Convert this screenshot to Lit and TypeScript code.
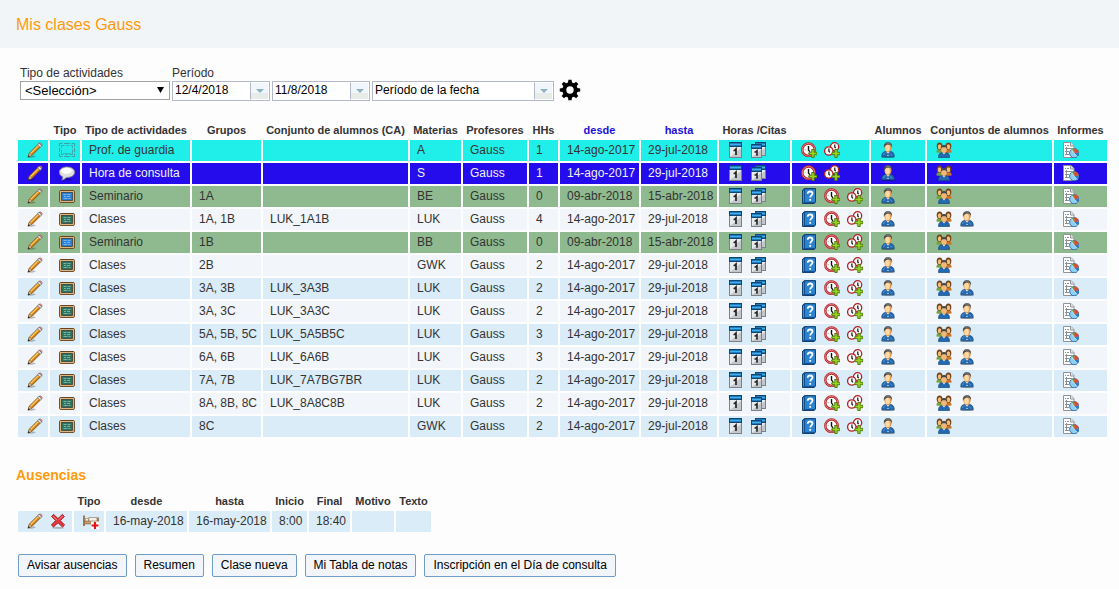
import { LitElement, html, css, svg, nothing } from "lit";
import type { TemplateResult } from "lit";
import { customElement, property } from "lit/decorators.js";

/* 16 x 16 drawings, keyed by icon name */
const person = svg`
  <ellipse cx="8" cy="15.200" rx="6.800" ry=".8" fill="#000" opacity=".35"/>
  <path d="M1.800 14.800c0-3 .8-4.800 3.400-5.200h5.600c2.600.4 3.400 2.200 3.400 5.200z" fill="#2369b0" stroke="#164a80" stroke-width=".8"/>
  <path d="M3.600 13c.2-1.600 1-2.400 2-2.600M10.500 11.500l1.500 2" stroke="#5b9bd8" stroke-width=".9" fill="none"/>
  <path d="M6 9.500l2 2.300 2-2.300z" fill="#e8d7c2"/>
  <ellipse cx="8" cy="5.400" rx="3.500" ry="4.700" fill="#dd9a58"/>
  <ellipse cx="7.600" cy="6" rx="2.300" ry="3.200" fill="#ffd9a0"/>
  <path d="M4 6C3.400 2 5 .2 8 .2S12.600 2 12 6c-.5-2.200-1-3-1.700-3.200-1.600-.3-2.800-.4-4 .1C5.500 3.300 4.400 4.200 4 6z" fill="#45484c"/>
  <path d="M5.500 1.800C7 .9 8.800.9 10.300 1.700" stroke="#858a90" stroke-width=".8" fill="none"/>
  <circle cx="8" cy="13.400" r=".6" fill="#fff"/>`;

const board = (face: string, light: string) => svg`
  <rect x=".6" y="2.500" width="14.800" height="11.900" rx="1.200" fill="#b98044" stroke="#69431f" stroke-width="1"/>
  <rect x="1.600" y="3.500" width="12.800" height="9.900" fill="none" stroke="#e9c48c" stroke-width=".8"/>
  <rect x="2.700" y="4.600" width="10.600" height="7.700" fill="${face}" stroke="#243e43" stroke-width=".7"/>
  <path d="M4.500 6.500h3m1 0h3M5 8.500h2m1 0h3M4.500 10.500h4m1 0h2" stroke="${light}" stroke-width=".8" opacity=".75"/>`;

const plus = svg`
  <path d="M10.800 7.500h2.400v2.800H16v2.400h-2.800v2.800h-2.400v-2.800H8v-2.400h2.800z" fill="#9bd41d" stroke="#48780d" stroke-width=".9"/>`;

const head = (x: number, y: number, r: number) => svg`
  <circle cx="${x}" cy="${y}" r="${r}" fill="#fff" stroke="#b21f24" stroke-width="1.300"/>`;

const page = (x: number, y: number, w: number, h: number) => svg`
  <rect x="${x + 0.5}" y="${y + 0.5}" width="${w - 1}" height="${h - 1}" fill="#e9eaec" stroke="#7c8188" stroke-width="1"/>
  <path d="M${x + 1} ${y + h - 1}L${x + w - 1} ${y + 6}V${y + h - 1}z" fill="#c3c6ca"/>
  <rect x="${x}" y="${y}" width="${w}" height="5" fill="#0c4678"/>
  <rect x="${x + 1}" y="${y + 1.5}" width="${w - 2}" height="2" fill="#3fb0f2"/>`;

const icons: Record<string, TemplateResult> = {
  pencil: svg`
    <path d="M1 15.600l6-2 2 .8-4 1.300z" fill="#000" opacity=".25"/>
    <path d="M1.200 14.900l1.200-3.900L11.800 1.700l2.500 2.400-9.400 9.300z" fill="#efa02a" stroke="#6f430f" stroke-width=".8"/>
    <path d="M3.500 11.300l8.700-8.700" stroke="#ffd877" stroke-width="1"/>
    <path d="M4.800 12.600l8.700-8.700" stroke="#a9610f" stroke-width=".8"/>
    <path d="M10.700 2.800l1.500-1.500 2.500 2.400-1.500 1.500z" fill="#dfe4ea" stroke="#68707a" stroke-width=".6"/>
    <path d="M12.200 1.300c1.200-1.200 3.800.8 2.500 2.400z" fill="#e9a19b" stroke="#944641" stroke-width=".6"/>
    <path d="M1.200 14.900l1.200-3.900 2.500 2.400z" fill="#f3d7a6" stroke="#6e5230" stroke-width=".6"/>
    <path d="M.7 15.400l1-2.300 1.300 1.300z" fill="#252525"/>`,
  guard: svg`
    <g fill="none" stroke="#4a7f88" stroke-width="1">
      <path d="M.5 4.500v-3h3M5 1.500h6M12.500 1.500h3v3M15.500 6v4M15.500 11.500v3h-3M11 14.500H5M3.500 14.500h-3v-3M.5 10V6" opacity=".7"/>
      <path d="M2.500 6V3.500h3M7 3.500h3M11.500 3.500h2V6M13.500 7.500v5h-3M9 12.500H6M4.500 12.500h-2v-5" opacity=".55"/>
      <path d="M4 11.500h8" opacity=".45"/>
    </g>`,
  talk: svg`
    <ellipse cx="8" cy="14.400" rx="5" ry=".9" fill="#000" opacity=".3"/>
    <path d="M8 2c4.500 0 7.600 2.200 7.600 5.200S12.500 12.400 8 12.400h-.8C6 14 4.400 14.800 2.800 14.800c.8-.8 1.100-2 .9-3C1.600 10.800.4 9.200.4 7.200.4 4.200 3.500 2 8 2z" fill="#dedede" stroke="#8f8f92" stroke-width=".8"/>
    <ellipse cx="7.400" cy="5.800" rx="5.400" ry="3" fill="#fff"/>`,
  boardBlue: board("#2b80d6", "#b4dcff"),
  boardGreen: board("#2d7462", "#b0dcc8"),
  calendar: svg`${page(1, 0, 13, 16)}
    <path d="M5.500 8.500h1l1.500-1.500v6" fill="none" stroke="#222" stroke-width="1.700"/>`,
  calendars: svg`${page(4, 0, 11, 14)}${page(0, 2, 11, 14)}
    <path d="M3.500 10h1L6 8.700v5" fill="none" stroke="#222" stroke-width="1.600"/>`,
  book: svg`
    <path d="M1.500 2.200L3.500.6h11v13.600l-1.500 1.300H1.500z" fill="#0f4f90" stroke="#0a3768" stroke-width=".9"/>
    <rect x="4" y="1.300" width="10" height="12.800" fill="#2c83cf"/>
    <path d="M2.500 2.500v12" stroke="#7f97ac" stroke-width=".8"/>
    <path d="M6.700 5.700c0-3 4.800-2.800 4.800-.1 0 1.700-2.300 1.900-2.300 3.900M9.200 11v1.700" fill="none" stroke="#fff" stroke-width="1.800"/>`,
  clock: svg`
    <circle cx="7.500" cy="7.700" r="6.200" fill="#fff" stroke="#b31d23" stroke-width="2.400"/>
    <circle cx="7.500" cy="7.700" r="6.300" fill="none" stroke="#ee9392" stroke-width=".8"/>
    <path d="M7.500 3.900v4.200l1.500 1.700" fill="none" stroke="#111" stroke-width="1.400"/>
    <path d="M3.700 7.700h.8M7.500 11.200v.8M10.500 7.700h.8" stroke="#777"/>${plus}`,
  clocks: svg`${head(10.600, 4.800, 4.100)}${head(4.800, 9, 4.200)}
    <path d="M10.800 2.400v2.800l.9 1M4.900 6.500v2.700l1 1.200" fill="none" stroke="#111" stroke-width="1.200"/>${plus}`,
  person,
  people: svg`
    <path d="M.4 10.500c0-2 .8-3.200 2.400-3.400H6v3.800z" fill="#76a03b"/>
    <path d="M15.600 10.500c0-2-.8-3.200-2.400-3.400H10v3.800z" fill="#c9732b"/>
    <ellipse cx="3.600" cy="4.200" rx="2.900" ry="3.600" fill="#70431d"/>
    <ellipse cx="12.400" cy="4.200" rx="2.900" ry="3.600" fill="#70431d"/>
    <ellipse cx="3.600" cy="4.800" rx="1.800" ry="2.500" fill="#f6bd73"/>
    <ellipse cx="12.400" cy="4.800" rx="1.800" ry="2.500" fill="#f6bd73"/>
    <path d="M2.500 15.500c0-2.900.7-4.400 2.800-4.700h5.400c2.100.3 2.800 1.800 2.800 4.700z" fill="#2369b0" stroke="#164a80" stroke-width=".7"/>
    <path d="M6.600 10.800L8 12.400l1.400-1.600z" fill="#f1e2d0"/>
    <ellipse cx="8" cy="7.200" rx="2.800" ry="3.800" fill="#f2b777"/>
    <path d="M4.900 7.500C4.400 4.500 5.700 2.900 8 2.900s3.600 1.600 3.100 4.600c-.5-1.900-1-2.200-3.100-2.200s-2.600.3-3.100 2.200z" fill="#43464a"/>`,
  report: svg`
    <path d="M.5.500h7.500l3 3v12H.5z" fill="#fff" stroke="#8f9499" stroke-width="1"/>
    <path d="M7.500.5v3.500H11" fill="#e3e5e8" stroke="#8f9499" stroke-width="1"/>
    <path d="M2 3.500h1m1 0h2M2 6.500h1m1 0h5M2 9.500h1m1 0h2M3.500 5v8M2 12.500h4" stroke="#8a8f94"/>
    <circle cx="11.200" cy="11.200" r="4.600" fill="#8bd0f5" stroke="#2a619b" stroke-width=".9"/>
    <path d="M11.200 11.200V6.400a4.800 4.800 0 0 1 4.600 4z" fill="#e4472f"/>
    <path d="M11.200 11.200V6.400a4.800 4.800 0 0 0-2.700.9z" fill="#58a43b"/>
    <path d="M11.200 11.200l4.600-.8a4.800 4.800 0 0 1-1.400 4.200z" fill="#2b7fc8"/>
    <path d="M8.500 7.300l2.700 3.900 3.200 3.400" fill="none" stroke="#fff" stroke-width=".6"/>`,
  remove: svg`
    <ellipse cx="8" cy="14.900" rx="6" ry=".8" fill="#000" opacity=".25"/>
    <path d="M1.600 3.400l2-2L8 5.600l4.400-4.200 2 2L10.300 7.600l4.300 4.400-2.100 2L8 9.800 3.500 14l-2.100-2 4.300-4.400z" fill="#e3383b" stroke="#9d171b" stroke-width=".9"/>
    <path d="M3 3.300l3.800 3.600M12.700 2.800L9 6.500" stroke="#f79a96" stroke-width=".9"/>`,
  bed: svg`
    <path d="M1 2.500v10.500M15 4.500v6" stroke="#8a5f35" stroke-width="1.600" fill="none"/>
    <path d="M1 8h14v2.800H1z" fill="#cf9d6d" stroke="#8a5f35" stroke-width=".8"/>
    <path d="M2.300 5.500h3.200V8H2.300zM5.800 4.500H14V8H5.800z" fill="#f4efe6" stroke="#988366" stroke-width=".7"/>
    <rect x="8" y="8.500" width="8" height="7.500" fill="#fff"/>
    <path d="M12 9v7M8.500 12.500h7" stroke="#e01515" stroke-width="2.200"/>`,
};

@customElement("gauss-icon")
class GaussIcon extends LitElement {
  @property() name = "";
  static styles = css`
    :host { display: block; width: 16px; height: 16px; }
    .art { display: block; width: 16px; height: 16px; }
  `;
  render() {
    return html`<svg class="art" viewBox="0 0 16 16" aria-hidden="true">${icons[this.name]}</svg>`;
  }
}

interface Column { label: string; width: number; sort?: boolean }
interface Lesson {
  tone: string; type: string; kind: string; groups: string; set: string;
  subject: string; hours: number; from: string; to: string;
}

const columns: Column[] = [
  { label: "", width: 30 },
  { label: "Tipo", width: 30 },
  { label: "Tipo de actividades", width: 108 },
  { label: "Grupos", width: 69 },
  { label: "Conjunto de alumnos (CA)", width: 145 },
  { label: "Materias", width: 51 },
  { label: "Profesores", width: 64 },
  { label: "HHs", width: 29 },
  { label: "desde", width: 79, sort: true },
  { label: "hasta", width: 76, sort: true },
  { label: "Horas /Citas", width: 71 },
  { label: "", width: 77 },
  { label: "Alumnos", width: 54 },
  { label: "Conjuntos de alumnos", width: 125 },
  { label: "Informes", width: 53 },
];

const absenceColumns: Column[] = [
  { label: "", width: 54 },
  { label: "Tipo", width: 30 },
  { label: "desde", width: 81 },
  { label: "hasta", width: 81 },
  { label: "Inicio", width: 35 },
  { label: "Final", width: 41 },
  { label: "Motivo", width: 42 },
  { label: "Texto", width: 35 },
];

const lesson = (
  tone: string, type: string, kind: string, groups: string, set: string,
  subject: string, hours: number, from = "14-ago-2017", to = "29-jul-2018",
): Lesson => ({ tone, type, kind, groups, set, subject, hours, from, to });

const lessons: Lesson[] = [
  lesson("cyan", "guard", "Prof. de guardia", "", "", "A", 1),
  lesson("blue", "talk", "Hora de consulta", "", "", "S", 1),
  lesson("green", "boardBlue", "Seminario", "1A", "", "BE", 0, "09-abr-2018", "15-abr-2018"),
  lesson("pale", "boardGreen", "Clases", "1A, 1B", "LUK_1A1B", "LUK", 4),
  lesson("green", "boardBlue", "Seminario", "1B", "", "BB", 0, "09-abr-2018", "15-abr-2018"),
  lesson("pale", "boardGreen", "Clases", "2B", "", "GWK", 2),
  lesson("sky", "boardGreen", "Clases", "3A, 3B", "LUK_3A3B", "LUK", 2),
  lesson("pale", "boardGreen", "Clases", "3A, 3C", "LUK_3A3C", "LUK", 2),
  lesson("sky", "boardGreen", "Clases", "5A, 5B, 5C", "LUK_5A5B5C", "LUK", 3),
  lesson("pale", "boardGreen", "Clases", "6A, 6B", "LUK_6A6B", "LUK", 3),
  lesson("sky", "boardGreen", "Clases", "7A, 7B", "LUK_7A7BG7BR", "LUK", 2),
  lesson("pale", "boardGreen", "Clases", "8A, 8B, 8C", "LUK_8A8C8B", "LUK", 2),
  lesson("sky", "boardGreen", "Clases", "8C", "", "GWK", 2),
];

const iconLabels: Record<string, string> = {
  pencil: "Editar", calendar: "Hora", calendars: "Horas", book: "Libro de clase",
  clock: "Añadir hora", clocks: "Añadir horas", person: "Alumnos",
  people: "Conjuntos de alumnos", report: "Informe", remove: "Eliminar",
};

@customElement("app-root")
class AppRoot extends LitElement {
  static styles = css`
    :host {
      display: block;
      min-height: 100vh;
      background: #fdfdfe;
      color: #333;
      font: 12px/16px "Liberation Sans", Arial, sans-serif;
    }
    .banner { background: #f1f5f8; padding: 15px 16px 13px; }
    .title { margin: 0; font-size: 16px; line-height: 20px; font-weight: 400; color: #ff9a0a; }
    .filters { display: flex; align-items: flex-end; gap: 2px; padding: 17px 20px 0; }
    .field { display: flex; flex-direction: column; }
    .pick { position: relative; display: flex; width: 150px; height: 20px; padding-bottom: 1px; box-sizing: border-box; }
    .select {
      appearance: none; width: 100%; margin: 0; padding: 0 20px 0 4px; border: 1px solid #a3a3a3;
      border-radius: 0; background: #fff; color: #000; font: 13px/17px "Liberation Sans", Arial, sans-serif;
    }
    .caret { position: absolute; right: 6px; top: 6px; width: 7px; height: 6px; pointer-events: none; }
    .combo { display: flex; box-sizing: border-box; width: 98px; height: 20px; border: 1px solid #b3b8ca; background: #fff; }
    .wide { width: 182px; }
    .input {
      flex: 1; min-width: 0; border: 0; padding: 0 2px 2px; background: none; color: #000;
      font: inherit; height: 18px; box-sizing: border-box;
    }
    .drop {
      width: 19px; height: 18px; padding: 0; border: 1px solid #fff; border-left: 1px solid #b3b8ca;
      background: linear-gradient(#f1f6fa 65%, #e7ece9 65%); display: grid; place-items: center;
    }
    .drop-art { display: block; width: 8px; height: 4px; }
    .gear { width: 22px; height: 22px; margin-left: 3px; padding: 0; border: 0; background: none; }
    .gear-art { display: block; width: 22px; height: 22px; }
    .lessons { padding: 19px 10px 0 16px; }
    .grid { border-collapse: separate; border-spacing: 2px 2px; table-layout: fixed; }
    .full { width: 100%; min-width: 1093px; }
    .compact { width: 417px; margin-left: 16px; }
    .th { height: 16px; padding: 0; font-size: 11px; line-height: 16px; font-weight: 700; text-align: center; white-space: nowrap; }
    .td { height: 16px; padding: 2px 0 3px 7px; white-space: nowrap; vertical-align: top; }
    .sort { color: #1d10d6; text-decoration: none; }
    .icons { display: flex; gap: 7px; padding-left: 2px; }
    .link { display: block; text-decoration: none; }
    .cyan .td { background: #20eee8; }
    .blue .td { background: #240cec; color: #f2f2f2; }
    .green .td { background: #8fba8f; }
    .pale .td { background: #f2f5f9; }
    .sky .td { background: #daecf8; }
    .section { margin: 0; padding: 26px 16px 6px; font-size: 14px; line-height: 20px; font-weight: 700; color: #ff9a0a; }
    .actions { display: flex; flex-wrap: wrap; gap: 8px; padding: 20px 18px 12px; }
    .button {
      height: 23px; margin: 0; padding: 0 8px 2px; border: 1px solid #6f9cc6; border-radius: 2px;
      background: #f2f5f9; color: #000; font: inherit;
    }
  `;

  private link(name: string) {
    return html`<a class="link" href="#" aria-label=${iconLabels[name]}><gauss-icon name=${name}></gauss-icon></a>`;
  }

  private iconCell(...names: string[]) {
    return html`<td class="td"><div class="icons">${names.map((n) => this.link(n))}</div></td>`;
  }

  private typeCell(name: string) {
    return html`<td class="td"><div class="icons"><gauss-icon name=${name}></gauss-icon></div></td>`;
  }

  private text(value: string | number) {
    return html`<td class="td">${value}</td>`;
  }

  private head(cols: Column[]) {
    return html`
      <colgroup>${cols.map((c) => html`<col style="width:${c.width}px" />`)}</colgroup>
      <thead><tr>${cols.map((c) => html`<th class="th" scope="col">${
        c.sort ? html`<a class="sort" href="#">${c.label}</a>` : c.label || nothing
      }</th>`)}</tr></thead>`;
  }

  private dropButton(label: string) {
    return html`<button class="drop" type="button" aria-label=${label}>
      <svg class="drop-art" viewBox="0 0 8 4" aria-hidden="true"><path d="M0 0h8L4 4z" fill="#8eb2c4" /></svg>
    </button>`;
  }

  private row(l: Lesson) {
    const taught = l.groups !== "";
    return html`<tr class=${l.tone}>
      ${this.iconCell("pencil")}${this.typeCell(l.type)}
      ${this.text(l.kind)}${this.text(l.groups)}${this.text(l.set)}${this.text(l.subject)}
      ${this.text("Gauss")}${this.text(l.hours)}${this.text(l.from)}${this.text(l.to)}
      ${this.iconCell("calendar", "calendars")}
      ${taught ? this.iconCell("book", "clock", "clocks") : this.iconCell("clock", "clocks")}
      ${this.iconCell("person")}
      ${l.set ? this.iconCell("people", "person") : this.iconCell("people")}
      ${this.iconCell("report")}
    </tr>`;
  }

  render() {
    const teeth = [0, 45, 90, 135, 180, 225, 270, 315];
    return html`
      <header class="banner"><h1 class="title">Mis clases Gauss</h1></header>
      <main>
        <form class="filters">
          <div class="field">
            <label for="kind">Tipo de actividades</label>
            <div class="pick">
              <select class="select" id="kind"><option>&lt;Selección&gt;</option></select>
              <svg class="caret" viewBox="0 0 7 6" aria-hidden="true"><path d="M0 0h7L3.500 6z" fill="#000" /></svg>
            </div>
          </div>
          <div class="field">
            <label for="from">Período</label>
            <div class="combo"><input class="input" id="from" value="12/4/2018" />${this.dropButton("Abrir fecha inicial")}</div>
          </div>
          <div class="combo"><input class="input" aria-label="Fecha final" value="11/8/2018" />${this.dropButton("Abrir fecha final")}</div>
          <div class="combo wide"><input class="input" aria-label="Tipo de período" value="Período de la fecha" />${this.dropButton("Abrir períodos")}</div>
          <button class="gear" type="button" aria-label="Configuración">
            <svg class="gear-art" viewBox="0 0 22 22" aria-hidden="true">
              ${teeth.map((a) => svg`<path d="M8.800 5l.6-4.200h3.200l.6 4.200z" transform="rotate(${a} 11 11)" />`)}
              <circle cx="11" cy="11" r="5.700" fill="none" stroke="#000" stroke-width="4" />
            </svg>
          </button>
        </form>
        <div class="lessons">
          <table class="grid full">
            ${this.head(columns)}
            <tbody>${lessons.map((l) => this.row(l))}</tbody>
          </table>
        </div>
        <h2 class="section">Ausencias</h2>
        <table class="grid compact">
          ${this.head(absenceColumns)}
          <tbody><tr class="sky">
            ${this.iconCell("pencil", "remove")}${this.typeCell("bed")}
            ${["16-may-2018", "16-may-2018", "8:00", "18:40", "", ""].map((t) => this.text(t))}
          </tr></tbody>
        </table>
        <div class="actions">
          ${["Avisar ausencias", "Resumen", "Clase nueva", "Mi Tabla de notas", "Inscripción en el Día de consulta"].map(
            (t) => html`<button class="button" type="button">${t}</button>`,
          )}
        </div>
      </main>`;
  }
}
